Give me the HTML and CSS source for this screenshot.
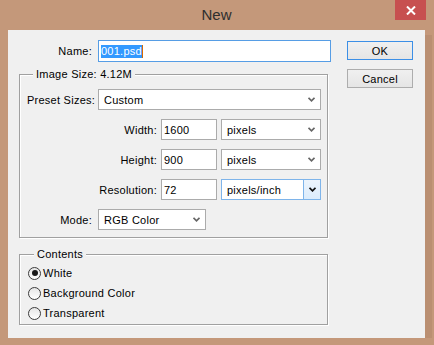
FILE: index.html
```html
<!DOCTYPE html>
<html lang="en">
<head>
  <meta charset="UTF-8">
  <meta name="viewport" content="width=device-width, initial-scale=1.0">
  <title>New</title>
  <link rel="stylesheet" href="styles.css">
</head>
<body>
  <div class="titlebar">
    <span class="title">New</span>
    <button type="button" class="close" aria-label="Close">
      <svg width="10" height="9" viewBox="0 0 10 9"><path d="M1 0.5 L9 8.5 M9 0.5 L1 8.5" stroke="#fff" stroke-width="2"/></svg>
    </button>
  </div>

  <div class="dialog">
    <div class="main">
      <div class="row name-row">
        <label class="lbl lbl-name">Name:</label>
        <div class="field name-field"><span class="selected">001.psd</span><span class="caret"></span></div>
      </div>

      <fieldset class="group size-group">
        <legend>Image Size: 4.12M</legend>
        <div class="row">
          <label class="lbl lbl-preset">Preset Sizes:</label>
          <div class="dropdown preset">Custom<span class="arrow"><svg width="7" height="5" viewBox="0 0 7 5"><path d="M0.5 0.8 L3.5 3.8 L6.5 0.8" fill="none" stroke="#666" stroke-width="1.7"/></svg></span></div>
        </div>
        <div class="row dim-row">
          <label class="lbl lbl-dim">Width:</label>
          <div class="field num">1600</div>
          <div class="dropdown units">pixels<span class="arrow"><svg width="7" height="5" viewBox="0 0 7 5"><path d="M0.5 0.8 L3.5 3.8 L6.5 0.8" fill="none" stroke="#666" stroke-width="1.7"/></svg></span></div>
        </div>
        <div class="row dim-row">
          <label class="lbl lbl-dim">Height:</label>
          <div class="field num">900</div>
          <div class="dropdown units">pixels<span class="arrow"><svg width="7" height="5" viewBox="0 0 7 5"><path d="M0.5 0.8 L3.5 3.8 L6.5 0.8" fill="none" stroke="#666" stroke-width="1.7"/></svg></span></div>
        </div>
        <div class="row dim-row">
          <label class="lbl lbl-dim">Resolution:</label>
          <div class="field num">72</div>
          <div class="dropdown units active">pixels/inch<span class="arrow-btn"><svg width="7" height="5" viewBox="0 0 7 5"><path d="M0.5 0.8 L3.5 3.8 L6.5 0.8" fill="none" stroke="#111" stroke-width="1.8"/></svg></span></div>
        </div>
        <div class="row dim-row">
          <label class="lbl lbl-name lbl-mode">Mode:</label>
          <div class="dropdown mode">RGB Color<span class="arrow"><svg width="7" height="5" viewBox="0 0 7 5"><path d="M0.5 0.8 L3.5 3.8 L6.5 0.8" fill="none" stroke="#666" stroke-width="1.7"/></svg></span></div>
        </div>
      </fieldset>

      <fieldset class="group contents-group">
        <legend>Contents</legend>
        <label class="radio"><span class="dot checked"></span>White</label>
        <label class="radio"><span class="dot"></span>Background Color</label>
        <label class="radio"><span class="dot"></span>Transparent</label>
      </fieldset>
    </div>

    <div class="actions">
      <button type="button" class="btn btn-default">OK</button>
      <button type="button" class="btn">Cancel</button>
    </div>
  </div>
</body>
</html>
```

FILE: styles.css
```css
body {
  margin: 0;
  background-color: #c4987a;
  font-family: "Liberation Sans", Arial, sans-serif;
  font-size: 11px;
  letter-spacing: 0.25px;
  color: #000;
}
.titlebar {
  height: 30px;
  display: flex;
  justify-content: center;
  position: relative;
}
.title {
  font-size: 15px;
  letter-spacing: 0;
  color: #2e2e2e;
  line-height: 30px;
  margin-left: -1px;
}
.close {
  position: absolute;
  top: 0;
  left: 395px;
  width: 31px;
  height: 20px;
  border: none;
  padding: 0;
  background-color: #c75050;
  display: flex;
  align-items: center;
  justify-content: center;
}
.dialog {
  margin-left: 8px;
  width: 417px;
  height: 308px;
  box-sizing: border-box;
  padding: 10px 0 0 11px;
  background-color: #f0f0f0;
  display: flex;
  box-shadow: 7px 5px 0 #ba8f72;
}
.main {
  width: 312px;
}
.row {
  display: flex;
  align-items: center;
  height: 21px;
}
.lbl {
  text-align: right;
  white-space: nowrap;
}
.lbl-name {
  width: 73px;
  margin-right: 6px;
}
.lbl-mode {
  width: 65px;
}
.lbl-preset {
  width: 71px;
  text-align: left;
}
.lbl-dim {
  width: 130px;
  margin-right: 4px;
}
.name-row {
  height: 22px;
}
.field {
  box-sizing: border-box;
  height: 21px;
  background: #fff;
  border: 1px solid #ababab;
  padding-left: 2px;
  display: flex;
  align-items: center;
}
.name-field {
  width: 233px;
  height: 22px;
  border-color: #569de5;
}
.selected {
  background-color: #3399ff;
  color: #fff;
  line-height: 13px;
}
.caret {
  width: 1px;
  height: 13px;
  background-color: #d96b00;
}
.num {
  width: 56px;
  margin-right: 4px;
}
.dropdown {
  box-sizing: border-box;
  height: 21px;
  background: #fff;
  border: 1px solid #ababab;
  padding-left: 5px;
  display: flex;
  align-items: center;
  justify-content: space-between;
}
.arrow {
  display: flex;
  margin-right: 5px;
}
.preset {
  width: 223px;
}
.units {
  width: 100px;
}
.mode {
  width: 108px;
}
.active {
  border-color: #7eb4ea;
}
.arrow-btn {
  width: 16px;
  height: 19px;
  border-left: 1px solid #7eb4ea;
  background: linear-gradient(#ecf4fc, #dcecfc);
  display: flex;
  align-items: center;
  justify-content: center;
}
.group {
  margin: 0;
  width: 309px;
  box-sizing: border-box;
  border: 1px solid #a0a0a0;
  box-shadow: inset 1px 1px 0 #fff, 1px 1px 0 #fff;
}
.group legend {
  margin-left: 6px;
  padding: 0 3px;
  line-height: 13px;
  background-color: #f0f0f0;
}
.size-group {
  margin-top: 6px;
  padding: 8px 6px 7px 7px;
}
.dim-row {
  margin-top: 9px;
}
.size-group .dim-row:first-of-type {
  margin-top: 8px;
}
.contents-group {
  margin-top: 10px;
  padding: 2px 6px 1px 8px;
}
.radio {
  display: flex;
  align-items: center;
  height: 20px;
}
.dot {
  width: 13px;
  height: 13px;
  box-sizing: border-box;
  border: 1px solid #3c3c3c;
  border-radius: 50%;
  background: linear-gradient(#e6e6e6, #ffffff);
  margin-right: 2px;
  display: flex;
  align-items: center;
  justify-content: center;
}
.dot.checked::after {
  content: "";
  width: 6px;
  height: 6px;
  border-radius: 50%;
  background-color: #1a1a1a;
}
.actions {
  margin-left: 16px;
  padding-top: 1px;
  display: flex;
  flex-direction: column;
  gap: 9px;
}
.btn {
  width: 66px;
  height: 19px;
  padding: 0;
  border: 1px solid #adadad;
  background: linear-gradient(#f0f0f0, #e5e5e5);
  font-family: inherit;
  font-size: 11px;
  letter-spacing: 0.25px;
  color: #000;
}
.btn-default {
  border-color: #3c8fe6;
}
```
